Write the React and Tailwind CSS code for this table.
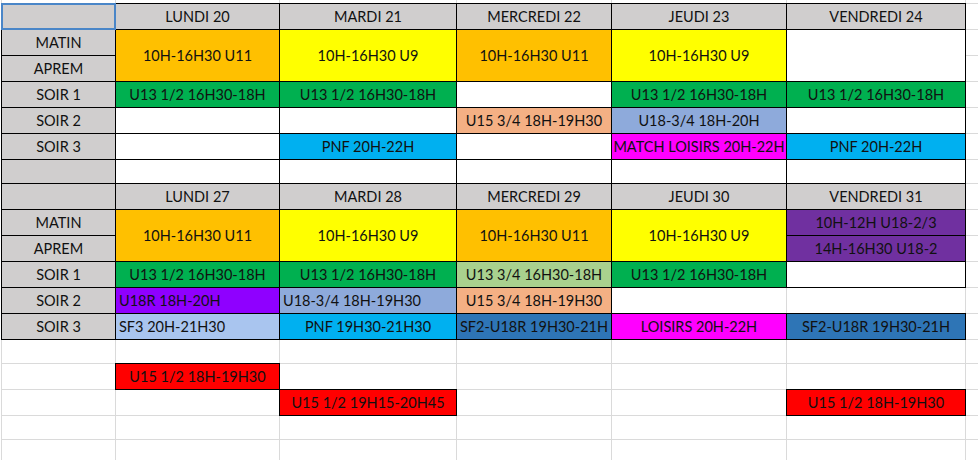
import React from 'react';
import clsx from 'clsx';

const BG = {
  white: 'bg-white',
  gray: 'bg-[#d0cece]',
  orange: 'bg-[#ffc000]',
  yellow: 'bg-[#ffff00]',
  green: 'bg-[#00b050]',
  lgreen: 'bg-[#a9d18e]',
  salmon: 'bg-[#f4b084]',
  steel: 'bg-[#8eaadb]',
  cyan: 'bg-[#00b0f0]',
  pink: 'bg-[#ff00ff]',
  violet: 'bg-[#8f00ff]',
  purple: 'bg-[#7030a0]',
  sky: 'bg-[#a9c5ef]',
  navy: 'bg-[#2e75b6]',
  red: 'bg-[#ff0000]',
};

// cell helpers
const E = { bg: 'white' };
const g = (t = '') => ({ t, bg: 'gray', box: true });
const b = (t, bg = 'white', extra = {}) => ({ t, bg, box: true, ...extra });
const m = (t, bg = 'white') => ({ t, bg, box: true, span: true });

const U11 = '10H-16H30 U11';
const U9 = '10H-16H30 U9';
const U13 = 'U13 1/2 16H30-18H';

const rows = [
  [E, E, E, E, E, E, E],
  [{ bg: 'gray', sel: true }, g('LUNDI 20'), g('MARDI 21'), g('MERCREDI 22'), g('JEUDI 23'), g('VENDREDI 24'), E],
  [g('MATIN'), m(U11, 'orange'), m(U9, 'yellow'), m(U11, 'orange'), m(U9, 'yellow'), m(''), E],
  [g('APREM'), E],
  [g('SOIR 1'), b(U13, 'green'), b(U13, 'green'), b(''), b(U13, 'green'), b(U13, 'green'), E],
  [g('SOIR 2'), b(''), b(''), b('U15 3/4 18H-19H30', 'salmon'), b('U18-3/4 18H-20H', 'steel'), b(''), E],
  [g('SOIR 3'), b(''), b('PNF 20H-22H', 'cyan'), b(''), b('MATCH LOISIRS 20H-22H', 'pink'), b('PNF 20H-22H', 'cyan'), E],
  [g(), b(''), b(''), b(''), b(''), b(''), E],
  [g(), g('LUNDI 27'), g('MARDI 28'), g('MERCREDI 29'), g('JEUDI 30'), g('VENDREDI 31'), E],
  [g('MATIN'), m(U11, 'orange'), m(U9, 'yellow'), m(U11, 'orange'), m(U9, 'yellow'), b('10H-12H U18-2/3', 'purple'), E],
  [g('APREM'), b('14H-16H30 U18-2', 'purple'), E],
  [g('SOIR 1'), b(U13, 'green'), b(U13, 'green'), b('U13 3/4 16H30-18H', 'lgreen'), b(U13, 'green'), b(''), E],
  [g('SOIR 2'), b('U18R 18H-20H', 'violet', { left: true }), b('U18-3/4 18H-19H30', 'steel', { left: true }), b('U15 3/4 18H-19H30', 'salmon'), E, E, E],
  [g('SOIR 3'), b('SF3 20H-21H30', 'sky', { left: true }), b('PNF 19H30-21H30', 'cyan'), b('SF2-U18R 19H30-21H', 'navy'), b('LOISIRS 20H-22H', 'pink'), b('SF2-U18R 19H30-21H', 'navy'), E],
  [E, E, E, E, E, E, E],
  [E, b('U15 1/2 18H-19H30', 'red'), E, E, E, E, E],
  [E, E, b('U15 1/2 19H15-20H45', 'red'), E, E, b('U15 1/2 18H-19H30', 'red'), E],
  [E, E, E, E, E, E, E],
  [E, E, E, E, E, E, E],
];

const Cell = ({ c }) => (
  <div
    className={clsx(
      'flex items-center whitespace-nowrap overflow-hidden pt-[2px] text-[#111]',
      BG[c.bg],
      c.span && 'row-span-2',
      c.box && 'outline outline-black',
      c.left ? 'justify-start pl-[3px]' : 'justify-center',
      c.sel && 'relative z-10 outline-2 outline-[#4a86c8] -outline-offset-1'
    )}
  >
    {c.t}
  </div>
);

export default function App() {
  return (
    <div className="w-[978px] h-[460px] overflow-hidden bg-white pl-px font-['Lato',sans-serif] text-[14.5px] leading-none">
      <div className="grid gap-px bg-[#dadada] pl-px grid-cols-[113px_163px_176px_154px_174px_178px_12px] grid-rows-[3px_25px_25px_25px_25px_25px_25px_23px_25px_25px_25px_25px_25px_25px_23px_25px_25px_23px_20px]">
        {rows.flatMap((row, ri) => row.map((c, ci) => <Cell key={`${ri}-${ci}`} c={c} />))}
      </div>
    </div>
  );
}
